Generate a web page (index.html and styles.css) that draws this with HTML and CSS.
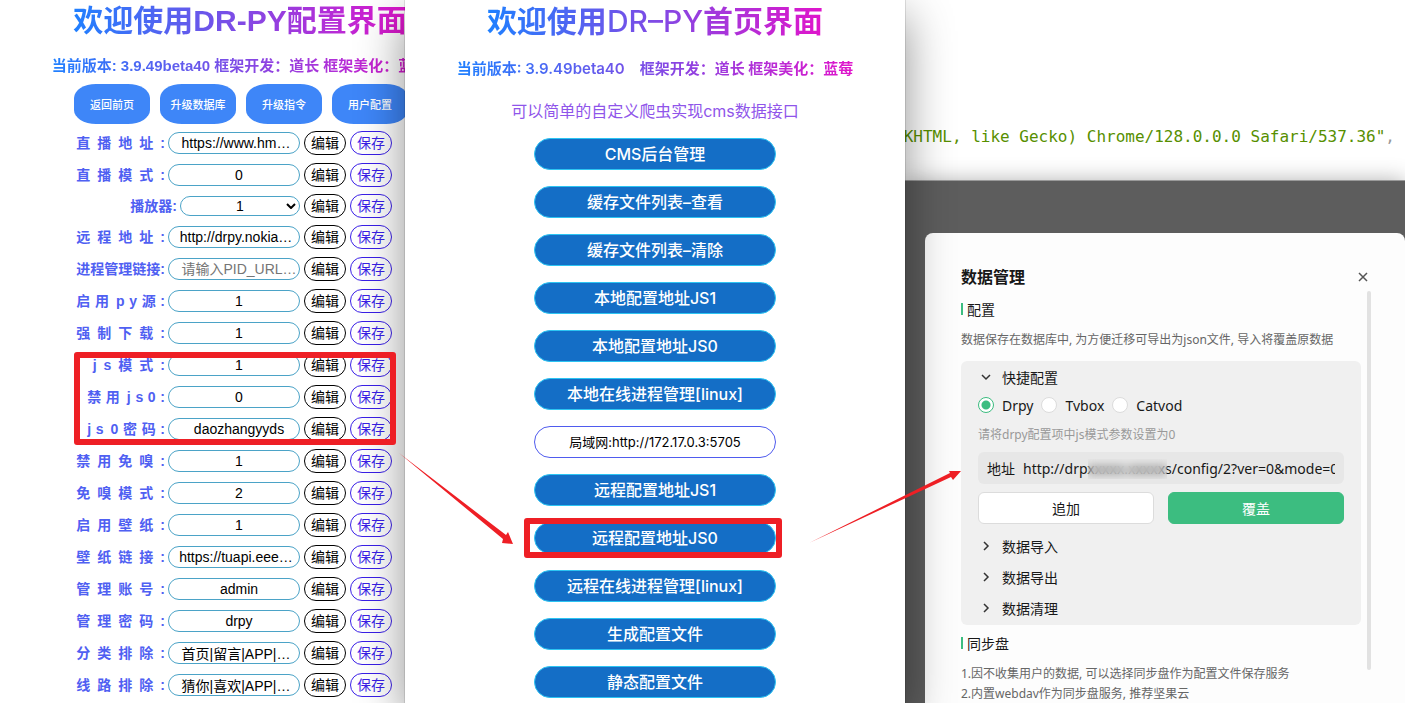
FILE: index.html
```html
<!DOCTYPE html>
<html lang="zh-CN">
<head>
<meta charset="utf-8">
<title>DR-PY</title>
<link rel="stylesheet" href="styles.css">
</head>
<body>
<main class="desktop">
  <section class="config">
    <div class="config-page">
      <h1 class="title gradient">欢迎使用DR-PY配置界面</h1>
      <p class="version gradient">当前版本: 3.9.49beta40 框架开发：道长 框架美化：蓝莓</p>
      <nav class="config-nav">
        <button class="nav-btn">返回前页</button>
        <button class="nav-btn">升级数据库</button>
        <button class="nav-btn">升级指令</button>
        <button class="nav-btn">用户配置</button>
      </nav>
      <form class="config-form">
        <div class="row"><label for="f1">直&ensp;播&ensp;地&ensp;址&ensp;:</label><input id="f1" class="field long" value="https://www.hm…"><button type="button" class="pill">编辑</button><button type="button" class="pill save">保存</button></div>
        <div class="row"><label for="f2">直&ensp;播&ensp;模&ensp;式&ensp;:</label><input id="f2" class="field" value="0"><button type="button" class="pill">编辑</button><button type="button" class="pill save">保存</button></div>
        <div class="row row-select"><label for="f3">播放器:</label><span class="select-wrap"><select id="f3" class="field"><option>1</option></select><svg class="caret" viewBox="0 0 10 6"><path d="M1 1l4 4 4-4"/></svg></span><button type="button" class="pill">编辑</button><button type="button" class="pill save">保存</button></div>
        <div class="row"><label for="f4">远&ensp;程&ensp;地&ensp;址&ensp;:</label><input id="f4" class="field long" value="http://drpy.nokia…"><button type="button" class="pill">编辑</button><button type="button" class="pill save">保存</button></div>
        <div class="row"><label for="f5">进程管理链接:</label><input id="f5" class="field" placeholder="请输入PID_URL…"><button type="button" class="pill">编辑</button><button type="button" class="pill save">保存</button></div>
        <div class="row"><label for="f6">启&emsp13;用&ensp;p&emsp13;y&emsp13;源&emsp13;:</label><input id="f6" class="field" value="1"><button type="button" class="pill">编辑</button><button type="button" class="pill save">保存</button></div>
        <div class="row"><label for="f7">强&ensp;制&ensp;下&ensp;载&ensp;:</label><input id="f7" class="field" value="1"><button type="button" class="pill">编辑</button><button type="button" class="pill save">保存</button></div>
        <div class="row"><label for="f8">j&ensp;s&ensp;模&ensp;式&ensp;:</label><input id="f8" class="field" value="1"><button type="button" class="pill">编辑</button><button type="button" class="pill save">保存</button></div>
        <div class="row"><label for="f9">禁&emsp13;用&ensp;j&emsp13;s&emsp13;0&emsp13;:</label><input id="f9" class="field" value="0"><button type="button" class="pill">编辑</button><button type="button" class="pill save">保存</button></div>
        <div class="row"><label for="f10">j&emsp13;s&ensp;0&emsp13;密&emsp13;码&emsp13;:</label><input id="f10" class="field" value="daozhangyyds"><button type="button" class="pill">编辑</button><button type="button" class="pill save">保存</button></div>
        <div class="row"><label for="f11">禁&ensp;用&ensp;免&ensp;嗅&ensp;:</label><input id="f11" class="field" value="1"><button type="button" class="pill">编辑</button><button type="button" class="pill save">保存</button></div>
        <div class="row"><label for="f12">免&ensp;嗅&ensp;模&ensp;式&ensp;:</label><input id="f12" class="field" value="2"><button type="button" class="pill">编辑</button><button type="button" class="pill save">保存</button></div>
        <div class="row"><label for="f13">启&ensp;用&ensp;壁&ensp;纸&ensp;:</label><input id="f13" class="field" value="1"><button type="button" class="pill">编辑</button><button type="button" class="pill save">保存</button></div>
        <div class="row"><label for="f14">壁&ensp;纸&ensp;链&ensp;接&ensp;:</label><input id="f14" class="field long" value="https://tuapi.eee…"><button type="button" class="pill">编辑</button><button type="button" class="pill save">保存</button></div>
        <div class="row"><label for="f15">管&ensp;理&ensp;账&ensp;号&ensp;:</label><input id="f15" class="field" value="admin"><button type="button" class="pill">编辑</button><button type="button" class="pill save">保存</button></div>
        <div class="row"><label for="f16">管&ensp;理&ensp;密&ensp;码&ensp;:</label><input id="f16" class="field" value="drpy"><button type="button" class="pill">编辑</button><button type="button" class="pill save">保存</button></div>
        <div class="row"><label for="f17">分&ensp;类&ensp;排&ensp;除&ensp;:</label><input id="f17" class="field long" value="首页|留言|APP|…"><button type="button" class="pill">编辑</button><button type="button" class="pill save">保存</button></div>
        <div class="row"><label for="f18">线&ensp;路&ensp;排&ensp;除&ensp;:</label><input id="f18" class="field long" value="猜你|喜欢|APP|…"><button type="button" class="pill">编辑</button><button type="button" class="pill save">保存</button></div>
      </form>
    </div>
  </section>

  <section class="home">
    <h1 class="title gradient">欢迎使用<span class="latin">DR–PY</span>首页界面</h1>
    <p class="version gradient">当前版本<span class="latin">: 3.9.49beta40</span>　框架开发：道长 框架美化：蓝莓</p>
    <p class="intro">可以简单的自定义爬虫实现cms数据接口</p>
    <div class="links">
      <button class="link-btn">CMS后台管理</button>
      <button class="link-btn">缓存文件列表–查看</button>
      <button class="link-btn">缓存文件列表–清除</button>
      <button class="link-btn">本地配置地址JS1</button>
      <button class="link-btn">本地配置地址JS0</button>
      <button class="link-btn">本地在线进程管理[linux]</button>
      <button class="link-btn lan">局域网:http://172.17.0.3:5705</button>
      <button class="link-btn">远程配置地址JS1</button>
      <button class="link-btn">远程配置地址JS0</button>
      <button class="link-btn">远程在线进程管理[linux]</button>
      <button class="link-btn">生成配置文件</button>
      <button class="link-btn">静态配置文件</button>
    </div>
  </section>

  <section class="side">
    <div class="code"><code>KHTML, like Gecko) Chrome/128.0.0.0 Safari/537.36"<span class="comma">,</span></code></div>
    <div class="app">
      <div class="dialog">
        <header class="dialog-head">
          <h2>数据管理</h2>
          <button class="close" aria-label="关闭"><svg viewBox="0 0 10 10"><path d="M1 1l8 8M9 1l-8 8"/></svg></button>
        </header>
        <div class="dialog-body">
          <div class="dialog-content">
            <h3>配置</h3>
            <p class="desc">数据保存在数据库中, 为方便迁移可导出为json文件, 导入将覆盖原数据</p>
            <div class="panel">
              <button class="fold open"><svg viewBox="0 0 12 12"><path d="M2 4l4 4 4-4"/></svg>快捷配置</button>
              <div class="radios">
                <label><input type="radio" name="kind" checked>Drpy</label>
                <label><input type="radio" name="kind">Tvbox</label>
                <label><input type="radio" name="kind">Catvod</label>
              </div>
              <p class="hint">请将drpy配置项中js模式参数设置为0</p>
              <div class="address">
                <label for="addr">地址</label>
                <input id="addr" value="http://drpxxxxx.xxxxxs/config/2?ver=0&amp;mode=0">
                <span class="mask"></span>
              </div>
              <div class="actions">
                <button class="act">追加</button>
                <button class="act primary">覆盖</button>
              </div>
              <button class="fold"><svg viewBox="0 0 12 12"><path d="M4 2l4 4-4 4"/></svg>数据导入</button>
              <button class="fold"><svg viewBox="0 0 12 12"><path d="M4 2l4 4-4 4"/></svg>数据导出</button>
              <button class="fold"><svg viewBox="0 0 12 12"><path d="M4 2l4 4-4 4"/></svg>数据清理</button>
            </div>
            <h3>同步盘</h3>
            <p class="notes">1.因不收集用户的数据, 可以选择同步盘作为配置文件保存服务<br>2.内置webdav作为同步盘服务, 推荐坚果云</p>
          </div>
          <div class="scroll"></div>
        </div>
      </div>
    </div>
  </section>

  <svg class="marks" width="1405" height="703" viewBox="0 0 1405 703">
    <g fill="none" stroke="#ee1f25" stroke-width="6" stroke-linejoin="round">
      <rect x="77" y="355" width="316" height="87"/>
      <rect x="527" y="521" width="252" height="34"/>
    </g>
    <g fill="#ee1f25">
      <path d="M399 453L506 535 508 532 513 544 502 543 503 539Z"/>
      <path d="M809 543L950 473 949 471 961 471 953 480 951 477Z"/>
    </g>
  </svg>
</main>
</body>
</html>
```
FILE: styles.css
```css
* { box-sizing: border-box; }

body, h1, h2, h3, p { margin: 0; }

body {
  height: 100vh;
  overflow: hidden;
  background: #fff;
  font-family: "Liberation Sans", "Noto Sans CJK SC", sans-serif;
  color: #000;
}

button, input, select { font: inherit; color: inherit; margin: 0; }
button { padding: 0; border: 0; background: none; white-space: nowrap; }

.desktop {
  position: relative;
  display: grid;
  grid-template-columns: 81fr 100fr 100fr;
  grid-template-rows: 100vh;
}

.gradient {
  width: max-content;
  margin: 0 auto;
  background: linear-gradient(90deg, #1f80ff, #e015cb);
  background-clip: text;
  -webkit-background-clip: text;
  color: transparent;
}

.title { font-size: 30px; line-height: 42px; font-weight: 700; white-space: nowrap; }
.version { font-size: 15px; line-height: 20px; font-weight: 700; white-space: nowrap; }
.latin { font-weight: 500; }

/* configuration window */
.config { overflow: hidden; min-width: 0; }
.config-page { min-width: 480px; }
.config .version { margin-top: 14px; }

.config-nav { display: flex; gap: 10px; margin: 8px 0 3px 74px; }
.nav-btn {
  width: 76px;
  height: 40px;
  border-radius: 22px / 14px;
  background: #3e86f8;
  color: #fff;
  font-size: 11px;
  font-weight: 500;
}

.config-form { width: 318px; margin-left: 74px; font-size: 14px; }
.row { display: flex; align-items: center; gap: 4px; height: 32px; }
.row-select { height: 30px; }
.row label {
  flex: 1;
  margin-right: -1px;
  text-align: right;
  font-weight: 700;
  line-height: 18px;
  color: #4f60f2;
  white-space: nowrap;
}
.row-select label { margin-right: -1px; }

.field {
  width: 132px;
  height: 22px;
  padding: 0 0 0 10px;
  border: 1px solid #4ba3c7;
  border-radius: 11px;
  background: #fff;
  text-align: center;
}
.field.long { padding: 0 0 0 4px; }
.field::placeholder { color: #757575; opacity: 1; }
.select-wrap { position: relative; display: flex; }
select.field {
  appearance: none;
  width: 120px;
  height: 20px;
  padding: 0;
  text-align-last: center;
}
.caret {
  position: absolute;
  right: 4px;
  top: 7px;
  width: 10px;
  height: 6px;
  fill: none;
  stroke: #000;
  stroke-width: 2;
}

.pill {
  width: 42px;
  height: 24px;
  border: 1px solid #000;
  border-radius: 12px;
  line-height: 20px;
}
.save { border-color: #3a1fe8; color: #3a1fe8; }

/* home window */
.home {
  z-index: 1;
  overflow: hidden;
  background: #fff;
  box-shadow: 0 0 1px rgba(0, 0, 0, .6), 0 16px 44px rgba(0, 0, 0, .44);
  font-family: Inter, "Noto Sans CJK SC", sans-serif;
  text-align: center;
}
.home .version { margin-top: 17px; }
.version .latin { font-weight: 600; }
.intro { margin-top: 20px; font-size: 16px; line-height: 24px; color: #8f55ea; }
.links {
  display: flex;
  flex-direction: column;
  align-items: center;
  gap: 16px;
  margin-top: 15px;
}
.link-btn {
  flex: none;
  width: 242px;
  height: 32px;
  border: 1px solid #2cc4f2;
  border-radius: 16px;
  background: #146ec6;
  color: #fff;
  font-size: 16px;
  line-height: 28px;
  font-weight: 500;
}
.lan { border-color: #4f5bee; background: #fff; color: #000; font-size: 13px; font-weight: 400; }

/* editor and data dialog */
.side { display: flex; flex-direction: column; min-width: 0; overflow: hidden; }
.code {
  flex: none;
  display: flex;
  justify-content: flex-end;
  height: 180px;
  padding: 127px 10px 0 0;
}
.code code {
  font-family: "DejaVu Sans Mono", monospace;
  font-size: 16px;
  line-height: 20px;
  color: #578f00;
  white-space: pre;
}
.comma { color: #999; }

.app {
  flex: 1;
  min-height: 0;
  padding: 52px 0 0 20px;
  border-top: 1px solid #999;
  background: #5d5d5d;
  box-shadow: 0 0 20px rgba(0, 0, 0, .3);
}
.dialog {
  height: 100%;
  padding: 32px 34px 0 36px;
  border-radius: 8px 8px 0 0;
  background: #fdfdfd;
  font-family: "Noto Sans", "Noto Sans CJK SC", sans-serif;
  color: #181818;
}
.dialog-head {
  display: flex;
  justify-content: space-between;
  align-items: center;
  height: 24px;
}
.dialog-head h2 { font-size: 16px; line-height: 24px; font-weight: 700; }
.close { display: flex; margin-right: 3px; }
.close svg { width: 10px; height: 10px; fill: none; stroke: #555; stroke-width: 1.500; }

.dialog-body { display: flex; justify-content: space-between; padding-top: 2px; gap: 6px; }
.dialog-content { flex: 1; min-width: 0; }
.scroll { width: 4px; height: 379px; border-radius: 2px; background: #e2e2e2; }

h3 {
  display: flex;
  align-items: center;
  gap: 4px;
  height: 36px;
  font-size: 14px;
  font-weight: 400;
}
h3::before { content: ""; width: 2px; height: 12px; background: #3cbd80; }
.desc { padding-top: 2px; font-size: 12px; line-height: 22px; color: #666; white-space: nowrap; }
.notes { padding-top: 3px; font-size: 12px; line-height: 20px; color: #666; white-space: nowrap; }

.panel {
  margin-top: 10px;
  padding: 0 17px 2px;
  border-radius: 6px;
  background: #f0f0f0;
  font-size: 14px;
}
.fold { display: flex; align-items: center; gap: 10px; width: 100%; height: 31px; padding-left: 2px; }
.fold svg { width: 12px; height: 12px; fill: none; stroke: #333; stroke-width: 1.500; }
.radios { display: flex; align-items: center; gap: 8px; height: 26px; }
.radios label { display: flex; align-items: center; gap: 8px; }
.radios input {
  appearance: none;
  width: 16px;
  height: 16px;
  border: 1px solid #dcdcdc;
  border-radius: 50%;
  background: #fff;
}
.radios input:checked {
  border-color: #3cbd80;
  background: radial-gradient(circle, #3cbd80 4px, #fff 5px);
}
.hint { padding: 7px 0; font-size: 12px; line-height: 20px; color: #999; }
.address {
  position: relative;
  display: flex;
  align-items: center;
  gap: 8px;
  height: 32px;
  margin-bottom: 8px;
  padding: 0 9px;
  border-radius: 6px;
  background: #e7e7e7;
}
.address input { flex: 1; min-width: 0; padding: 0; border: 0; background: none; }
.mask {
  position: absolute;
  left: 110px;
  top: 7px;
  width: 79px;
  height: 20px;
  backdrop-filter: blur(5px);
}
.actions { display: flex; gap: 14px; margin-bottom: 6px; }
.act {
  flex: 1;
  height: 32px;
  border: 1px solid #dcdcdc;
  border-radius: 6px;
  background: #fff;
}
.primary { border-color: #3cbd80; background: #3cbd80; color: #fff; }

/* red boxes and arrows drawn over the windows */
.marks { position: absolute; left: 0; top: 0; z-index: 2; pointer-events: none; }
```
